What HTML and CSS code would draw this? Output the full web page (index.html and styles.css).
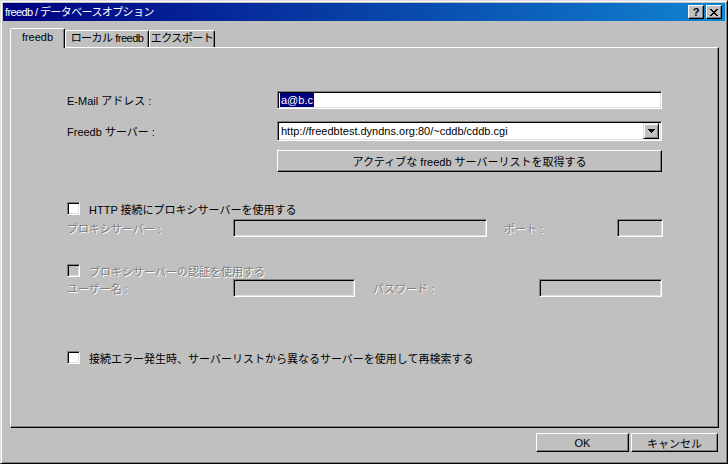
FILE: index.html
```html
<!DOCTYPE html>
<html lang="ja">
<head>
<meta charset="utf-8">
<title>freedb / データベースオプション</title>
<link rel="stylesheet" href="styles.css">
</head>
<body>
<div class="window">
  <div class="titlebar">
    <span class="title">freedb / データベースオプション</span>
    <div class="caption-buttons">
      <span class="cbtn help">?</span>
      <span class="cbtn close"><svg width="8" height="7" viewBox="0 0 8 7" shape-rendering="crispEdges"><path d="M0 0h2v1H0zM6 0h2v1H6zM1 1h2v1H1zM5 1h2v1H5zM2 2h4v1H2zM3 3h2v1H3zM2 4h4v1H2zM1 5h2v1H1zM5 5h2v1H5zM0 6h2v1H0zM6 6h2v1H6z" fill="#000"/></svg></span>
    </div>
  </div>
  <div class="client">
    <div class="tabs">
      <div class="tab active">freedb</div>
      <div class="tab t2">ローカル freedb</div>
      <div class="tab t3">エクスポート</div>
    </div>
    <div class="panel">
      <div class="row r-email">
        <span class="lbl">E-Mail アドレス :</span>
        <div class="field email"><span class="sel">a@b.c</span></div>
      </div>
      <div class="row r-server">
        <span class="lbl">Freedb サーバー :</span>
        <div class="field combo">
          <span class="combo-text">http://freedbtest.dyndns.org:80/~cddb/cddb.cgi</span>
          <span class="dd"><svg width="7" height="4" viewBox="0 0 7 4" shape-rendering="crispEdges"><path d="M0 0h7v1H0zM1 1h5v1H1zM2 2h3v1H2zM3 3h1v1H3z" fill="#000"/></svg></span>
        </div>
      </div>
      <div class="row r-fetch">
        <div class="btn fetch">アクティブな freedb サーバーリストを取得する</div>
      </div>
      <div class="row chkrow r-chk1">
        <span class="chk"></span><span class="chk-lbl">HTTP 接続にプロキシサーバーを使用する</span>
      </div>
      <div class="row r-proxy">
        <span class="lbl short dis">プロキシサーバー :</span>
        <div class="field off proxy"></div>
        <span class="lbl port-lbl dis">ポート :</span>
        <div class="field off port"></div>
      </div>
      <div class="row chkrow r-chk2">
        <span class="chk off"></span><span class="chk-lbl dis">プロキシサーバーの認証を使用する</span>
      </div>
      <div class="row r-user">
        <span class="lbl short dis">ユーザー名 :</span>
        <div class="field off user"></div>
        <span class="lbl pwd-lbl dis">パスワード :</span>
        <div class="field off pwd"></div>
      </div>
      <div class="row chkrow r-chk3">
        <span class="chk"></span><span class="chk-lbl">接続エラー発生時、サーバーリストから異なるサーバーを使用して再検索する</span>
      </div>
    </div>
    <div class="footer">
      <div class="btn ok">OK</div>
      <div class="btn cancel">キャンセル</div>
    </div>
  </div>
</div>
</body>
</html>
```

FILE: styles.css
```css
* { box-sizing: border-box; }
html, body { margin: 0; padding: 0; }
body {
  width: 728px;
  height: 464px;
  overflow: hidden;
  background: #c0c0c0;
  font-family: "Liberation Sans", "Noto Sans CJK JP", sans-serif;
  font-size: 11px;
  color: #000;
}
.window {
  width: 728px;
  height: 464px;
  border: 1px solid;
  border-color: #dfdfdf #000 #000 #dfdfdf;
  box-shadow: inset 1px 1px #fff, inset -1px -1px #808080;
  padding: 2px;
  background: #c0c0c0;
  display: flex;
  flex-direction: column;
}
.titlebar {
  flex: none;
  height: 18px;
  background: linear-gradient(to right, #000080, #1084d0);
  display: flex;
  align-items: center;
  padding: 0 3px 0 2px;
}
.title {
  flex: 1;
  color: #fff;
  font-size: 11px;
  line-height: 18px;
  letter-spacing: -0.6px;
}
.caption-buttons { display: flex; gap: 2px; }
.cbtn {
  width: 16px;
  height: 14px;
  background: #c0c0c0;
  border: 1px solid;
  border-color: #fff #000 #000 #fff;
  box-shadow: inset -1px -1px #808080;
  display: flex;
  align-items: center;
  justify-content: center;
}
.cbtn.help {
  font-weight: bold;
  font-size: 11px;
  line-height: 12px;
  font-family: "Liberation Sans", sans-serif;
}
.cbtn svg { display: block; }

.client {
  flex: 1;
  display: flex;
  flex-direction: column;
  padding: 7px 7px 0 7px;
}
.tabs {
  display: flex;
  align-items: flex-end;
  height: 19px;
  position: relative;
  z-index: 1;
}
.tab {
  height: 17px;
  border: 1px solid;
  border-bottom: none;
  border-color: #fff #000 transparent #fff;
  box-shadow: inset -1px 0 #808080;
  border-radius: 2px 2px 0 0;
  background: #c0c0c0;
  text-align: center;
  line-height: 15px;
  white-space: nowrap;
  letter-spacing: -0.5px;
}
.tab.active { height: 20px; width: 55px; margin-bottom: -1px; line-height: 17px; letter-spacing: 0; }
.tab.t2 { width: 84px; }
.tab.t3 { width: 66px; }

.panel {
  flex: none;
  width: 709px;
  height: 381px;
  border: 1px solid;
  border-color: #fff #000 #000 #fff;
  box-shadow: inset -1px -1px #808080;
  padding: 43px 0 0 56px;
  display: flex;
  flex-direction: column;
}
.row { display: flex; align-items: center; white-space: nowrap; }
.lbl { width: 210px; flex: none; }
.lbl.short { width: 166px; }
.lbl.port-lbl { width: 113px; margin-left: 17px; }
.lbl.pwd-lbl { width: 166px; margin-left: 18px; }
.dis { color: #808080; text-shadow: 1px 1px 0 #fff; }

.field {
  flex: none;
  height: 18px;
  border: 1px solid;
  border-color: #808080 #fff #fff #808080;
  box-shadow: inset 1px 1px #000, inset -1px -1px #dfdfdf;
  background: #fff;
  padding: 2px;
  display: flex;
  align-items: center;
}
.field.off { background: #c0c0c0; }
.email { width: 385px; }
.sel { background: #000080; color: #fff; line-height: 14px; padding: 0 1px 0 1px; }
.r-server { margin-top: 12px; }
.combo { width: 385px; height: 20px; padding: 2px 2px 2px 3px; }
.combo-text { flex: 1; }
.dd {
  width: 16px;
  height: 16px;
  border: 1px solid;
  border-color: #dfdfdf #000 #000 #dfdfdf;
  box-shadow: inset 1px 1px #fff, inset -1px -1px #808080;
  background: #c0c0c0;
  display: flex;
  align-items: center;
  justify-content: center;
}
.dd svg { display: block; }

.btn {
  border: 1px solid;
  border-color: #fff #000 #000 #fff;
  box-shadow: inset -1px -1px #808080;
  background: #c0c0c0;
  display: flex;
  align-items: center;
  justify-content: center;
}
.r-fetch { margin-top: 9px; padding-left: 210px; }
.fetch { width: 385px; height: 22px; }

.chkrow { height: 13px; }
.chk {
  flex: none;
  width: 13px;
  height: 13px;
  border: 1px solid;
  border-color: #808080 #fff #fff #808080;
  box-shadow: inset 1px 1px #000, inset -1px -1px #dfdfdf;
  background: #fff;
}
.chk.off { background: #c0c0c0; }
.chk-lbl { margin-left: 9px; }
.r-chk1 { margin-top: 30px; }
.r-proxy { margin-top: 4px; }
.proxy { width: 254px; }
.port { width: 46px; }
.r-chk2 { margin-top: 27px; }
.r-user { margin-top: 2px; }
.user { width: 122px; }
.pwd { width: 123px; }
.r-chk3 { margin-top: 54px; }

.footer {
  display: flex;
  justify-content: flex-end;
  gap: 2px;
  padding: 5px 0 0 0;
}
.ok { width: 93px; height: 19px; }
.cancel { width: 87px; height: 19px; }
```
